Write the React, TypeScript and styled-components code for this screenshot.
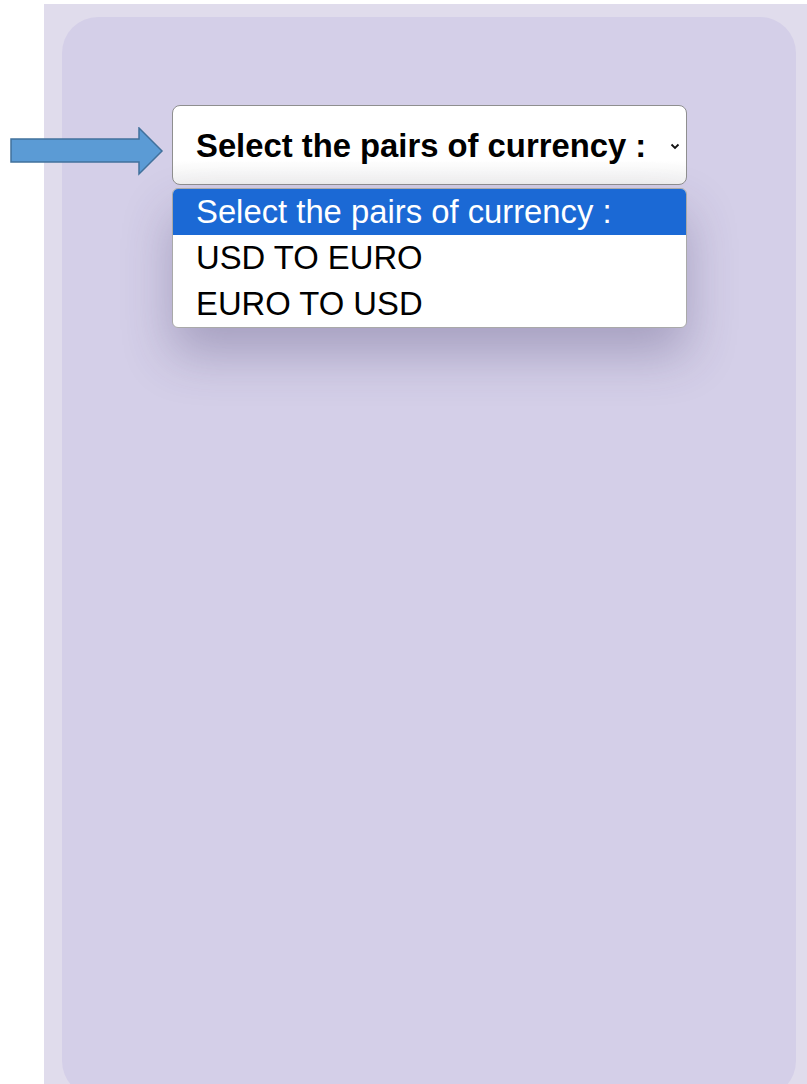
import React, { ReactElement, useState } from 'react';
import styled, { createGlobalStyle } from 'styled-components';

const GlobalStyle = createGlobalStyle`
  html, body {
    margin: 0;
    padding: 0;
    background: #ffffff;
    font-family: "Liberation Sans", Arial, sans-serif;
  }
`;

const options = ['Select the pairs of currency :', 'USD TO EURO', 'EURO TO USD'];

export default function App(): ReactElement {
  const [selected, setSelected] = useState(0);

  return (
    <>
      <GlobalStyle />
      <Page>
        <Pointer width="154" height="50" viewBox="0 0 154 50">
          <path
            d="M1 12 H129 V1 L152 24 L129 47 V35 H1 Z"
            fill="#5b9bd5"
            stroke="#41719c"
            strokeWidth="1.5"
            strokeLinejoin="miter"
          />
        </Pointer>
        <Backdrop>
          <Card>
            <Picker>
              <SelectBox>
                <span>{options[0]}</span>
                <Chevron width="10" height="7" viewBox="0 0 10 7">
                  <path d="M1.5 1.5 L5 5 L8.5 1.5" fill="none" stroke="#111" strokeWidth="1.8" />
                </Chevron>
              </SelectBox>
              <OptionList>
                {options.map((label, i) => (
                  <OptionRow key={label} active={i === selected} onMouseEnter={() => setSelected(i)}>
                    {label}
                  </OptionRow>
                ))}
              </OptionList>
            </Picker>
          </Card>
        </Backdrop>
      </Page>
    </>
  );
}

const Page = styled.div`
  position: relative;
  height: 1084px;
  overflow: hidden;
  padding: 4px 0 0 44px;
  box-sizing: border-box;
`;

const Pointer = styled.svg`
  position: absolute;
  left: 10px;
  top: 127px;
  z-index: 2;
`;

const Backdrop = styled.div`
  background: #e0dcec;
  height: 100%;
  padding: 13px 11px 0 18px;
  box-sizing: border-box;
`;

const Card = styled.div`
  background: #d4cfe8;
  border-radius: 36px;
  height: 1080px;
  padding: 88px 0 0 110px;
  box-sizing: border-box;
`;

const Picker = styled.div`
  position: relative;
  width: 515px;
`;

const SelectBox = styled.div`
  height: 80px;
  box-sizing: border-box;
  border: 1px solid #8f8f8f;
  border-radius: 8px;
  background: linear-gradient(#ffffff 70%, #f1f1f1);
  display: flex;
  align-items: center;
  justify-content: space-between;
  padding: 2px 6px 0 23px;
  font-size: 32.8px;
  font-weight: 700;
  color: #000;
`;

const Chevron = styled.svg`
  margin-top: 0;
`;

const OptionList = styled.div`
  position: absolute;
  top: 83px;
  left: 0;
  right: 0;
  background: #ffffff;
  border: 1px solid #a9a9a9;
  border-radius: 6px;
  overflow: hidden;
  box-shadow: 0 26px 50px rgba(60, 50, 100, 0.3);
`;

const OptionRow = styled.div<{ active?: boolean }>`
  height: 46px;
  line-height: 46px;
  padding-left: 23px;
  font-size: 32.8px;
  color: ${({ active }) => (active ? '#ffffff' : '#000000')};
  background: ${({ active }) => (active ? '#1b69d5' : 'transparent')};
  white-space: nowrap;
`;
